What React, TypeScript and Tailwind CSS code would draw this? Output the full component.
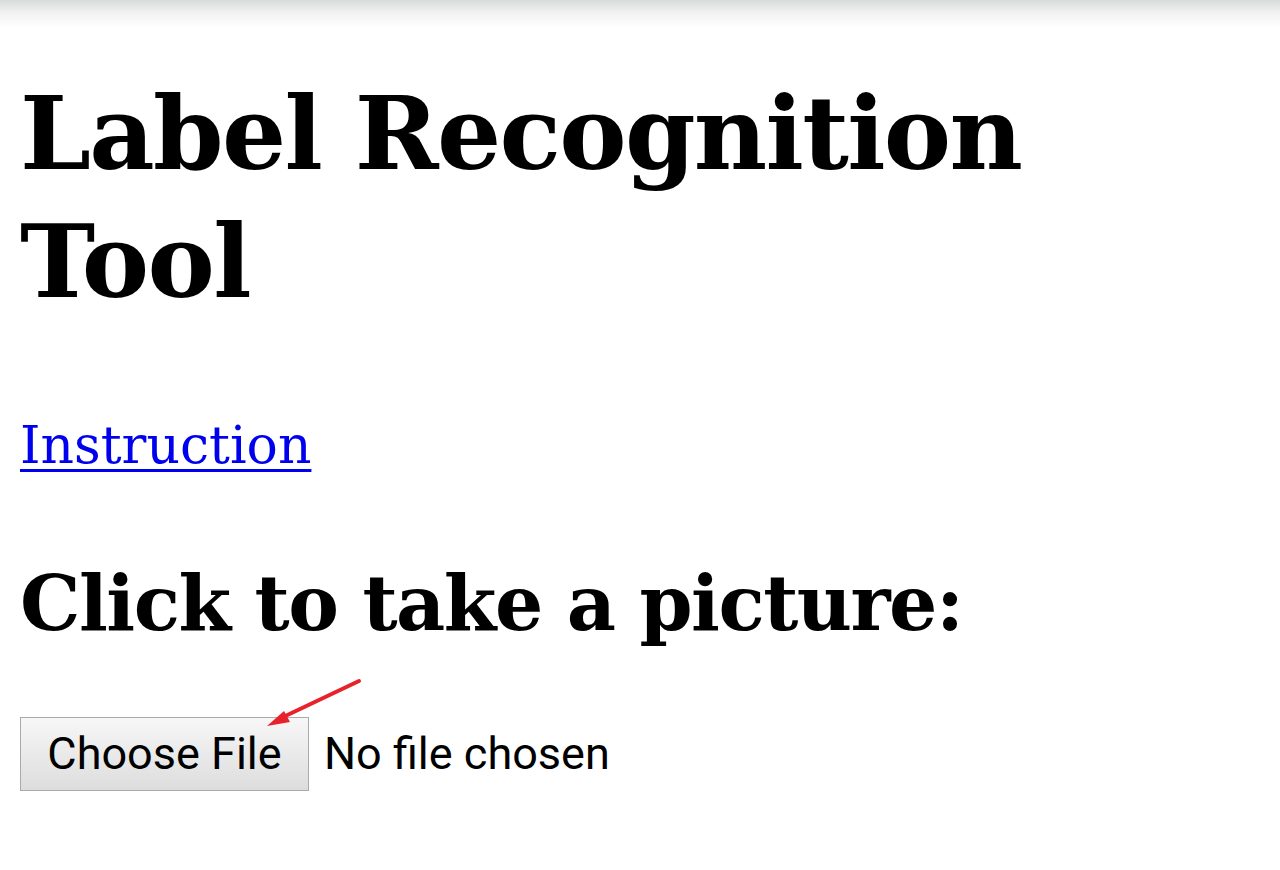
export default function App() {
  return (
    <div className="relative min-h-[870px] w-full bg-white text-black">
      <div className="h-[28px] w-full bg-gradient-to-b from-[#d9dcdc] via-[#f3f3f3] to-white" />
      <div className="px-[20px]" style={{ fontFamily: '"DejaVu Serif", serif' }}>
        <h1 className="mt-[42px] text-[101px] font-bold leading-[128px] tracking-[-1.7px]">
          Label Recognition
          <br />
          Tool
        </h1>
        <div className="mt-[84px]">
          <a href="#" className="text-[52px] leading-[70px] text-[#0000ee] underline decoration-[3px] underline-offset-[6px]">
            Instruction
          </a>
        </div>
        <h2 className="mt-[74px] text-[76px] font-bold leading-[100px] tracking-[-1.5px]">Click to take a picture:</h2>
        <div className="relative mt-[63px] flex items-center gap-[15px]" style={{ fontFamily: 'Roboto, sans-serif' }}>
          <div className="flex h-[74px] w-[289px] items-center justify-center border border-[#aaaaaa] bg-gradient-to-b from-[#f7f7f7] to-[#dddddd] text-[45px] text-black">
            Choose File
          </div>
          <span className="text-[45px]">No file chosen</span>
          <svg className="absolute left-[219px] top-[-42px]" width="130" height="60" viewBox="0 0 130 60">
            <line x1="120" y1="6" x2="40" y2="44" stroke="#e8222b" strokeWidth="4" strokeLinecap="round" />
            <polygon points="28,51 45,36 51,47" fill="#e8222b" />
          </svg>
        </div>
      </div>
    </div>
  );
}
